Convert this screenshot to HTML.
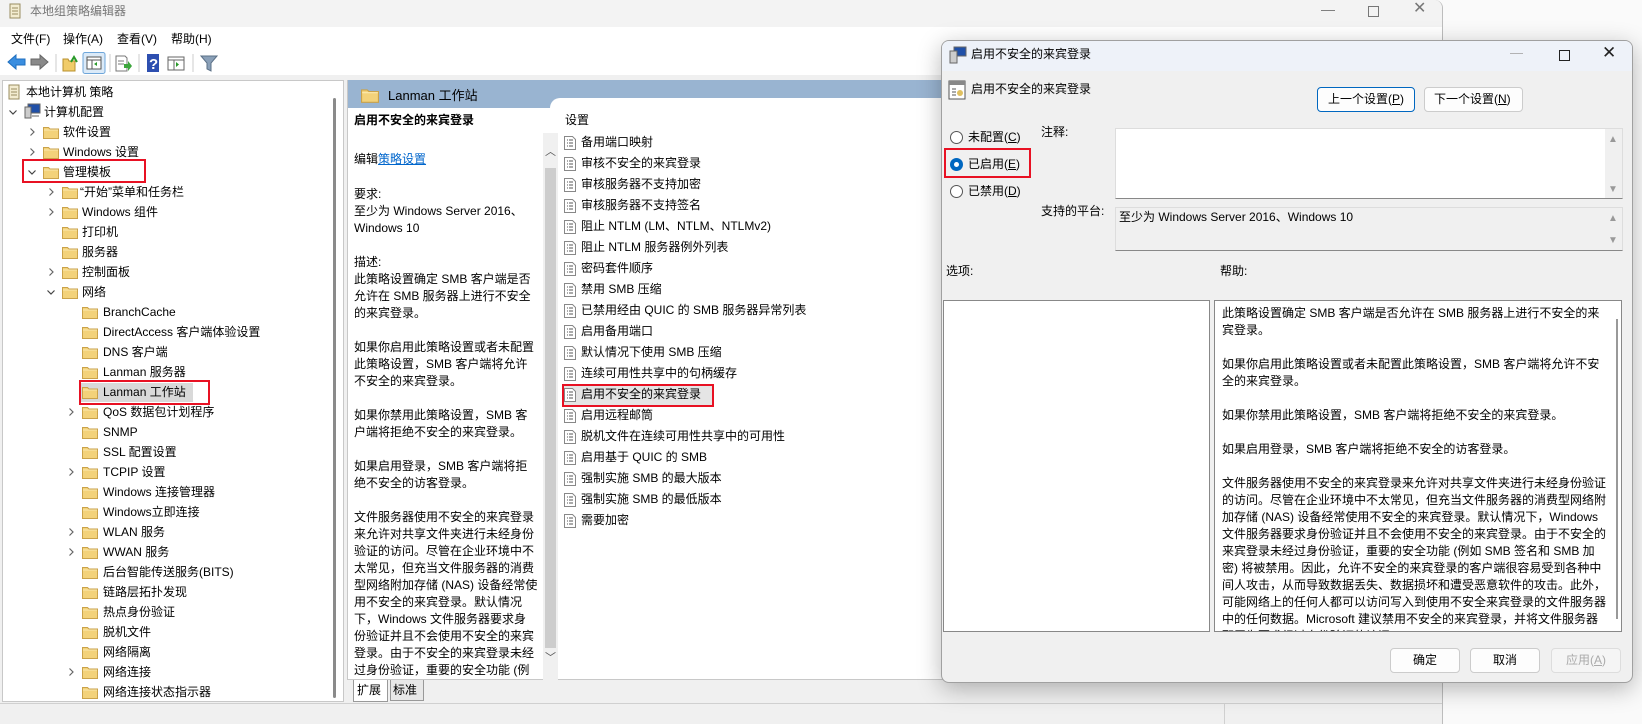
<!DOCTYPE html>
<html><head><meta charset="utf-8">
<style>
*{margin:0;padding:0;box-sizing:border-box}
body{width:1642px;height:724px;overflow:hidden;background:#fafafa;font-family:"Liberation Sans","Noto Sans CJK SC",sans-serif;font-size:12px;color:#000;position:relative}
.a{position:absolute}
.t{position:absolute;white-space:nowrap;font-size:12px;line-height:17px}
.red{position:absolute;border:2px solid #e81123}
.fo{position:absolute;width:16px;height:13px}
.ch{position:absolute;width:8px;height:8px}
.pi{position:absolute;width:12px;height:14px}
a{color:#0066cc;text-decoration:underline}
</style></head><body>
<svg width="0" height="0" style="position:absolute">
<defs>
<symbol id="fold" viewBox="0 0 16 13"><path d="M0.5 1.5h5l1.5 1.5h8.5v9.5h-15z" fill="#f3d27a" stroke="#caa24a"/><path d="M1 4h14" stroke="#fbe8ae"/></symbol>
<symbol id="cr" viewBox="0 0 8 8"><path d="M2.5 0.5l3.5 3.5l-3.5 3.5" fill="none" stroke="#666" stroke-width="1.2"/></symbol>
<symbol id="cd" viewBox="0 0 8 8"><path d="M0.5 2.5l3.5 3.5l3.5-3.5" fill="none" stroke="#444" stroke-width="1.2"/></symbol>
<symbol id="pol" viewBox="0 0 12 14"><path d="M0.5 0.5h8l3 3v10h-11z" fill="#fff" stroke="#888"/><path d="M3 4h1M5 4h4M3 7h1M5 7h4M3 10h1M5 10h4" stroke="#555"/></symbol>
</defs></svg>

<!-- main window -->
<div class="a" style="left:0;top:0;width:1443px;height:724px;background:#f0f0f0;border-right:1px solid #bdbdbd;border-top-right-radius:8px"></div>
<div class="a" style="left:0;top:0;width:1442px;height:27px;background:#f3f3f3;border-top-right-radius:8px"></div>
<svg class="a" style="left:7px;top:3px" width="16" height="18"><path d="M3 1h10v14h-10z" fill="#f3ecd0" stroke="#9a8c60"/><path d="M5 5h6M5 8h6M5 11h6" stroke="#9a8c60"/></svg>
<div class="t" style="left:30px;top:3px;color:#777">本地组策略编辑器</div>
<div class="t" style="left:1321px;top:1px;color:#777;font-size:14px">—</div>
<div class="a" style="left:1368px;top:6px;width:11px;height:11px;border:1px solid #777"></div>
<div class="t" style="left:1413px;top:0px;color:#777;font-size:16px">✕</div>
<div class="a" style="left:0;top:27px;width:1442px;height:48px;background:#fff"></div>
<div class="t" style="left:11px;top:31px">文件(F)</div>
<div class="t" style="left:63px;top:31px">操作(A)</div>
<div class="t" style="left:117px;top:31px">查看(V)</div>
<div class="t" style="left:171px;top:31px">帮助(H)</div>
<!-- toolbar -->
<svg class="a" style="left:5px;top:52px" width="220" height="22">
<path d="M3 10l8-7v4h9v6h-9v4z" fill="#3a8ee0" stroke="#1f6fbf"/>
<path d="M43 10l-8-7v4h-9v6h9v4z" fill="#8a8a8a" stroke="#666"/>
<path d="M51 2v18" stroke="#ccc"/>
<path d="M58 7h5l1 2h6v10h-12z" fill="#f1cc6a" stroke="#b8902e"/><path d="M66 10l3-5l3 5" fill="none" stroke="#2a9a2a" stroke-width="2"/>
<rect x="78" y="0.5" width="22" height="21" rx="2" fill="#dbeaf8" stroke="#6ea6da"/><rect x="82" y="5" width="14" height="12" fill="#fff" stroke="#555"/><path d="M82 8h14M87 8v9" stroke="#555"/><path d="M92 10l-3 2l3 2z" fill="#2a9a2a"/>
<path d="M105 2v18" stroke="#ccc"/>
<path d="M111 4h9l2 2v13h-11z" fill="#fff" stroke="#777"/><path d="M113 9h6M113 12h6" stroke="#777"/><path d="M119 12h4v-3l4 5l-4 5v-3h-4z" fill="#3ca63c"/>
<path d="M134 2v18" stroke="#ccc"/>
<rect x="142" y="2" width="12" height="18" fill="#2d4fb0"/><text x="144" y="17" fill="#fff" font-size="15" font-weight="bold" font-family="Liberation Sans">?</text>
<rect x="163" y="5" width="16" height="13" fill="#fff" stroke="#666"/><path d="M163 8h16M169 8v10" stroke="#666"/><path d="M171 10l3 2.5l-3 2.5z" fill="#2a9a2a"/>
<path d="M188 2v18" stroke="#ccc"/>
<path d="M196 4h16l-6 7v8l-4-2v-6z" fill="#8aa0b8" stroke="#5a6f86"/>
</svg>

<!-- tree pane -->
<div class="a" style="left:2px;top:80px;width:342px;height:622px;background:#fff;border:1px solid #c8c8c8"></div>
<div class="a" style="left:333px;top:98px;width:3px;height:600px;background:#8a8a8a;border-radius:2px"></div>
<div class="a" style="left:80px;top:383px;width:113px;height:19px;background:#d9d9d9"></div>
<svg class="a" style="left:6px;top:84px" width="16" height="17"><path d="M3 1h10v14h-10z" fill="#f3ecd0" stroke="#9a8c60"/><path d="M5 5h6M5 8h6M5 11h6" stroke="#9a8c60"/></svg>
<div class="t" style="left:26px;top:84px">本地计算机 策略</div>
<svg class="ch" style="left:9px;top:108px"><use href="#cd"/></svg>
<svg class="a" style="left:24px;top:103px" width="17" height="16"><rect x="4" y="1" width="12" height="9" fill="#2050a8" stroke="#666"/><rect x="1" y="4" width="6" height="11" fill="#ccc" stroke="#666"/><path d="M8 13h7" stroke="#666"/></svg>
<div class="t" style="left:44px;top:104px">计算机配置</div>

<svg class="ch" style="left:28px;top:128px"><use href="#cr"/></svg><svg class="fo" style="left:43px;top:126px"><use href="#fold"/></svg><div class="t" style="left:63px;top:124px">软件设置</div>
<svg class="ch" style="left:28px;top:148px"><use href="#cr"/></svg><svg class="fo" style="left:43px;top:146px"><use href="#fold"/></svg><div class="t" style="left:63px;top:144px">Windows 设置</div>
<svg class="ch" style="left:28px;top:168px"><use href="#cd"/></svg><svg class="fo" style="left:43px;top:166px"><use href="#fold"/></svg><div class="t" style="left:63px;top:164px">管理模板</div>

<svg class="ch" style="left:47px;top:188px"><use href="#cr"/></svg><svg class="fo" style="left:62px;top:186px"><use href="#fold"/></svg><div class="t" style="left:80px;top:184px">“开始”菜单和任务栏</div>
<svg class="ch" style="left:47px;top:208px"><use href="#cr"/></svg><svg class="fo" style="left:62px;top:206px"><use href="#fold"/></svg><div class="t" style="left:82px;top:204px">Windows 组件</div>
<svg class="fo" style="left:62px;top:226px"><use href="#fold"/></svg><div class="t" style="left:82px;top:224px">打印机</div>
<svg class="fo" style="left:62px;top:246px"><use href="#fold"/></svg><div class="t" style="left:82px;top:244px">服务器</div>
<svg class="ch" style="left:47px;top:268px"><use href="#cr"/></svg><svg class="fo" style="left:62px;top:266px"><use href="#fold"/></svg><div class="t" style="left:82px;top:264px">控制面板</div>
<svg class="ch" style="left:47px;top:288px"><use href="#cd"/></svg><svg class="fo" style="left:62px;top:286px"><use href="#fold"/></svg><div class="t" style="left:82px;top:284px">网络</div>

<svg class="fo" style="left:82px;top:306px"><use href="#fold"/></svg><div class="t" style="left:103px;top:304px">BranchCache</div>
<svg class="fo" style="left:82px;top:326px"><use href="#fold"/></svg><div class="t" style="left:103px;top:324px">DirectAccess 客户端体验设置</div>
<svg class="fo" style="left:82px;top:346px"><use href="#fold"/></svg><div class="t" style="left:103px;top:344px">DNS 客户端</div>
<svg class="fo" style="left:82px;top:366px"><use href="#fold"/></svg><div class="t" style="left:103px;top:364px">Lanman 服务器</div>
<svg class="fo" style="left:82px;top:386px"><use href="#fold"/></svg><div class="t" style="left:103px;top:384px">Lanman 工作站</div>
<svg class="ch" style="left:67px;top:408px"><use href="#cr"/></svg><svg class="fo" style="left:82px;top:406px"><use href="#fold"/></svg><div class="t" style="left:103px;top:404px">QoS 数据包计划程序</div>
<svg class="fo" style="left:82px;top:426px"><use href="#fold"/></svg><div class="t" style="left:103px;top:424px">SNMP</div>
<svg class="fo" style="left:82px;top:446px"><use href="#fold"/></svg><div class="t" style="left:103px;top:444px">SSL 配置设置</div>
<svg class="ch" style="left:67px;top:468px"><use href="#cr"/></svg><svg class="fo" style="left:82px;top:466px"><use href="#fold"/></svg><div class="t" style="left:103px;top:464px">TCPIP 设置</div>
<svg class="fo" style="left:82px;top:486px"><use href="#fold"/></svg><div class="t" style="left:103px;top:484px">Windows 连接管理器</div>
<svg class="fo" style="left:82px;top:506px"><use href="#fold"/></svg><div class="t" style="left:103px;top:504px">Windows立即连接</div>
<svg class="ch" style="left:67px;top:528px"><use href="#cr"/></svg><svg class="fo" style="left:82px;top:526px"><use href="#fold"/></svg><div class="t" style="left:103px;top:524px">WLAN 服务</div>
<svg class="ch" style="left:67px;top:548px"><use href="#cr"/></svg><svg class="fo" style="left:82px;top:546px"><use href="#fold"/></svg><div class="t" style="left:103px;top:544px">WWAN 服务</div>
<svg class="fo" style="left:82px;top:566px"><use href="#fold"/></svg><div class="t" style="left:103px;top:564px">后台智能传送服务(BITS)</div>
<svg class="fo" style="left:82px;top:586px"><use href="#fold"/></svg><div class="t" style="left:103px;top:584px">链路层拓扑发现</div>
<svg class="fo" style="left:82px;top:606px"><use href="#fold"/></svg><div class="t" style="left:103px;top:604px">热点身份验证</div>
<svg class="fo" style="left:82px;top:626px"><use href="#fold"/></svg><div class="t" style="left:103px;top:624px">脱机文件</div>
<svg class="fo" style="left:82px;top:646px"><use href="#fold"/></svg><div class="t" style="left:103px;top:644px">网络隔离</div>
<svg class="ch" style="left:67px;top:668px"><use href="#cr"/></svg><svg class="fo" style="left:82px;top:666px"><use href="#fold"/></svg><div class="t" style="left:103px;top:664px">网络连接</div>
<svg class="fo" style="left:82px;top:686px"><use href="#fold"/></svg><div class="t" style="left:103px;top:684px">网络连接状态指示器</div>

<div class="red" style="left:22px;top:159px;width:124px;height:24px"></div>
<div class="red" style="left:79px;top:380px;width:131px;height:25px"></div>

<!-- right pane -->
<div class="a" style="left:347px;top:80px;width:1093px;height:600px;background:#fff;border:1px solid #c8c8c8"></div>
<div class="a" style="left:348px;top:80px;width:1092px;height:28px;background:#99b4d1"></div>
<div class="a" style="left:550px;top:98px;width:890px;height:20px;background:#fff;border-top-left-radius:10px"></div>
<svg class="a" style="left:361px;top:88px" width="18" height="15"><use href="#fold"/></svg>
<div class="t" style="left:388px;top:87px;font-size:13px">Lanman 工作站</div>

<div class="t" style="left:354px;top:112px;font-weight:bold">启用不安全的来宾登录</div>
<div class="t" style="left:354px;top:151px">编辑<a>策略设置</a></div>
<div class="t" style="left:354px;top:186px;line-height:17px">要求:<br>至少为 Windows Server 2016、<br>Windows 10<br><br>描述:<br>此策略设置确定 SMB 客户端是否<br>允许在 SMB 服务器上进行不安全<br>的来宾登录。<br><br>如果你启用此策略设置或者未配置<br>此策略设置，SMB 客户端将允许<br>不安全的来宾登录。<br><br>如果你禁用此策略设置，SMB 客<br>户端将拒绝不安全的来宾登录。<br><br>如果启用登录，SMB 客户端将拒<br>绝不安全的访客登录。<br><br>文件服务器使用不安全的来宾登录<br>来允许对共享文件夹进行未经身份<br>验证的访问。尽管在企业环境中不<br>太常见，但充当文件服务器的消费<br>型网络附加存储 (NAS) 设备经常使<br>用不安全的来宾登录。默认情况<br>下，Windows 文件服务器要求身<br>份验证并且不会使用不安全的来宾<br>登录。由于不安全的来宾登录未经<br>过身份验证，重要的安全功能 (例</div>

<div class="a" style="left:543px;top:133px;width:15px;height:547px;background:#f0f0f0"></div>
<div class="a" style="left:545px;top:168px;width:11px;height:480px;background:#cdcdcd"></div>
<div class="t" style="left:545px;top:144px;color:#555;font-size:11px">︿</div>
<div class="t" style="left:545px;top:650px;color:#555;font-size:11px">﹀</div>

<div class="t" style="left:565px;top:112px">设置</div>
<div class="a" style="left:562px;top:386px;width:150px;height:19px;background:#e5e5e5"></div>
<svg class="pi" style="left:564px;top:136px"><use href="#pol"/></svg><div class="t" style="left:581px;top:134px">备用端口映射</div>
<svg class="pi" style="left:564px;top:157px"><use href="#pol"/></svg><div class="t" style="left:581px;top:155px">审核不安全的来宾登录</div>
<svg class="pi" style="left:564px;top:178px"><use href="#pol"/></svg><div class="t" style="left:581px;top:176px">审核服务器不支持加密</div>
<svg class="pi" style="left:564px;top:199px"><use href="#pol"/></svg><div class="t" style="left:581px;top:197px">审核服务器不支持签名</div>
<svg class="pi" style="left:564px;top:220px"><use href="#pol"/></svg><div class="t" style="left:581px;top:218px">阻止 NTLM (LM、NTLM、NTLMv2)</div>
<svg class="pi" style="left:564px;top:241px"><use href="#pol"/></svg><div class="t" style="left:581px;top:239px">阻止 NTLM 服务器例外列表</div>
<svg class="pi" style="left:564px;top:262px"><use href="#pol"/></svg><div class="t" style="left:581px;top:260px">密码套件顺序</div>
<svg class="pi" style="left:564px;top:283px"><use href="#pol"/></svg><div class="t" style="left:581px;top:281px">禁用 SMB 压缩</div>
<svg class="pi" style="left:564px;top:304px"><use href="#pol"/></svg><div class="t" style="left:581px;top:302px">已禁用经由 QUIC 的 SMB 服务器异常列表</div>
<svg class="pi" style="left:564px;top:325px"><use href="#pol"/></svg><div class="t" style="left:581px;top:323px">启用备用端口</div>
<svg class="pi" style="left:564px;top:346px"><use href="#pol"/></svg><div class="t" style="left:581px;top:344px">默认情况下使用 SMB 压缩</div>
<svg class="pi" style="left:564px;top:367px"><use href="#pol"/></svg><div class="t" style="left:581px;top:365px">连续可用性共享中的句柄缓存</div>
<svg class="pi" style="left:564px;top:388px"><use href="#pol"/></svg><div class="t" style="left:581px;top:386px">启用不安全的来宾登录</div>
<svg class="pi" style="left:564px;top:409px"><use href="#pol"/></svg><div class="t" style="left:581px;top:407px">启用远程邮筒</div>
<svg class="pi" style="left:564px;top:430px"><use href="#pol"/></svg><div class="t" style="left:581px;top:428px">脱机文件在连续可用性共享中的可用性</div>
<svg class="pi" style="left:564px;top:451px"><use href="#pol"/></svg><div class="t" style="left:581px;top:449px">启用基于 QUIC 的 SMB</div>
<svg class="pi" style="left:564px;top:472px"><use href="#pol"/></svg><div class="t" style="left:581px;top:470px">强制实施 SMB 的最大版本</div>
<svg class="pi" style="left:564px;top:493px"><use href="#pol"/></svg><div class="t" style="left:581px;top:491px">强制实施 SMB 的最低版本</div>
<svg class="pi" style="left:564px;top:514px"><use href="#pol"/></svg><div class="t" style="left:581px;top:512px">需要加密</div>
<div class="red" style="left:562px;top:384px;width:152px;height:23px"></div>

<!-- tabs & status -->
<div class="a" style="left:353px;top:680px;width:35px;height:22px;background:#fff;border:1px solid #999;border-top:none"></div>
<div class="t" style="left:357px;top:682px">扩展</div>
<div class="a" style="left:390px;top:680px;width:34px;height:21px;background:#e8e8e8;border:1px solid #999;border-top:none"></div>
<div class="t" style="left:393px;top:682px">标准</div>
<div class="a" style="left:0;top:703px;width:1442px;height:1px;background:#d0d0d0"></div>
<div class="a" style="left:1224px;top:704px;width:1px;height:20px;background:#d0d0d0"></div>

<!-- dialog -->
<div class="a" style="left:941px;top:40px;width:692px;height:643px;background:#f0f0f0;border:1px solid #a0a0a0;border-radius:8px;box-shadow:0 6px 24px rgba(0,0,0,0.28);overflow:hidden">
 <div class="a" style="left:0;top:0;width:692px;height:30px;background:#eef2f9"></div>
</div>
<svg class="a" style="left:949px;top:46px" width="18" height="18"><rect x="5" y="1" width="12" height="9" fill="#2050a8" stroke="#666"/><rect x="1" y="5" width="7" height="12" fill="#ccc" stroke="#666"/></svg>
<div class="t" style="left:971px;top:46px">启用不安全的来宾登录</div>
<div class="t" style="left:1510px;top:44px;color:#aaa;font-size:13px">—</div>
<div class="a" style="left:1559px;top:50px;width:11px;height:11px;border:1.5px solid #222"></div>
<div class="t" style="left:1602px;top:44px;font-size:17px;color:#222">✕</div>
<svg class="a" style="left:948px;top:80px" width="18" height="20"><rect x="1" y="1" width="16" height="18" fill="#fff" stroke="#555"/><rect x="1" y="1" width="16" height="4" fill="#888"/><path d="M4 9h4M4 12h4M4 15h4" stroke="#555"/><circle cx="12" cy="13" r="3" fill="#e0c060"/></svg>
<div class="t" style="left:971px;top:81px">启用不安全的来宾登录</div>
<div class="a" style="left:1317px;top:87px;width:98px;height:25px;background:#fdfdfd;border:1px solid #0067c0;border-radius:4px"></div>
<div class="t" style="left:1328px;top:91px">上一个设置(<u>P</u>)</div>
<div class="a" style="left:1424px;top:87px;width:99px;height:25px;background:#fdfdfd;border:1px solid #ccc;border-radius:4px"></div>
<div class="t" style="left:1434px;top:91px">下一个设置(<u>N</u>)</div>

<div class="a" style="left:950px;top:131px;width:13px;height:13px;border:1px solid #555;border-radius:50%;background:#fff"></div>
<div class="t" style="left:968px;top:129px">未配置(<u>C</u>)</div>
<div class="a" style="left:950px;top:158px;width:13px;height:13px;border-radius:50%;background:#0067c0"></div>
<div class="a" style="left:954px;top:162px;width:5px;height:5px;border-radius:50%;background:#fff"></div>
<div class="t" style="left:968px;top:156px">已启用(<u>E</u>)</div>
<div class="a" style="left:950px;top:185px;width:13px;height:13px;border:1px solid #555;border-radius:50%;background:#fff"></div>
<div class="t" style="left:968px;top:183px">已禁用(<u>D</u>)</div>
<div class="red" style="left:944px;top:148px;width:87px;height:30px"></div>

<div class="t" style="left:1041px;top:124px">注释:</div>
<div class="a" style="left:1115px;top:128px;width:508px;height:71px;background:#fff;border:1px solid #ddd;border-bottom:1px solid #888"></div>
<div class="a" style="left:1605px;top:129px;width:17px;height:69px;background:#f0f0f0"></div>
<div class="t" style="left:1608px;top:131px;color:#999;font-size:10px">▲</div>
<div class="t" style="left:1608px;top:181px;color:#999;font-size:10px">▼</div>
<div class="t" style="left:1041px;top:203px">支持的平台:</div>
<div class="a" style="left:1115px;top:207px;width:508px;height:44px;background:#f0f0f0;border:1px solid #ddd;border-bottom:1px solid #888"></div>
<div class="t" style="left:1119px;top:209px">至少为 Windows Server 2016、Windows 10</div>
<div class="t" style="left:1608px;top:210px;color:#999;font-size:10px">▲</div>
<div class="t" style="left:1608px;top:232px;color:#999;font-size:10px">▼</div>

<div class="t" style="left:946px;top:263px">选项:</div>
<div class="t" style="left:1220px;top:263px">帮助:</div>
<div class="a" style="left:943px;top:300px;width:267px;height:332px;background:#fff;border:1px solid #888"></div>
<div class="a" style="left:1214px;top:300px;width:408px;height:332px;background:#fff;border:1px solid #888;overflow:hidden">
<div class="t" style="left:7px;top:4px;line-height:17px">此策略设置确定 SMB 客户端是否允许在 SMB 服务器上进行不安全的来<br>宾登录。<br><br>如果你启用此策略设置或者未配置此策略设置，SMB 客户端将允许不安<br>全的来宾登录。<br><br>如果你禁用此策略设置，SMB 客户端将拒绝不安全的来宾登录。<br><br>如果启用登录，SMB 客户端将拒绝不安全的访客登录。<br><br>文件服务器使用不安全的来宾登录来允许对共享文件夹进行未经身份验证<br>的访问。尽管在企业环境中不太常见，但充当文件服务器的消费型网络附<br>加存储 (NAS) 设备经常使用不安全的来宾登录。默认情况下，Windows<br>文件服务器要求身份验证并且不会使用不安全的来宾登录。由于不安全的<br>来宾登录未经过身份验证，重要的安全功能 (例如 SMB 签名和 SMB 加<br>密) 将被禁用。因此，允许不安全的来宾登录的客户端很容易受到各种中<br>间人攻击，从而导致数据丢失、数据损坏和遭受恶意软件的攻击。此外，<br>可能网络上的任何人都可以访问写入到使用不安全来宾登录的文件服务器<br>中的任何数据。Microsoft 建议禁用不安全的来宾登录，并将文件服务器<br>配置为要求经过身份验证的访问。</div>
<div class="a" style="left:401px;top:18px;width:2px;height:300px;background:#999"></div>
</div>

<div class="a" style="left:1390px;top:648px;width:70px;height:25px;background:#fdfdfd;border:1px solid #ccc;border-radius:4px"></div>
<div class="t" style="left:1413px;top:652px">确定</div>
<div class="a" style="left:1470px;top:648px;width:70px;height:25px;background:#fdfdfd;border:1px solid #ccc;border-radius:4px"></div>
<div class="t" style="left:1493px;top:652px">取消</div>
<div class="a" style="left:1551px;top:648px;width:70px;height:25px;background:#f5f5f5;border:1px solid #ddd;border-radius:4px"></div>
<div class="t" style="left:1566px;top:652px;color:#aaa">应用(<u>A</u>)</div>
</body></html>
